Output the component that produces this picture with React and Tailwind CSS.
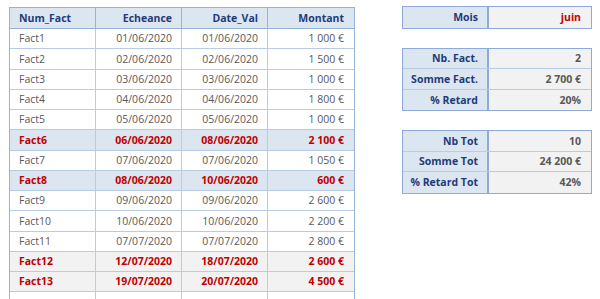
const rows = [
  { n: 'Fact1', e: '01/06/2020', d: '01/06/2020', m: '1 000 €' },
  { n: 'Fact2', e: '02/06/2020', d: '02/06/2020', m: '1 500 €' },
  { n: 'Fact3', e: '03/06/2020', d: '03/06/2020', m: '1 000 €' },
  { n: 'Fact4', e: '04/06/2020', d: '04/06/2020', m: '1 800 €' },
  { n: 'Fact5', e: '05/06/2020', d: '05/06/2020', m: '1 000 €' },
  { n: 'Fact6', e: '06/06/2020', d: '08/06/2020', m: '2 100 €', hl: 'blue' },
  { n: 'Fact7', e: '07/06/2020', d: '07/06/2020', m: '1 050 €' },
  { n: 'Fact8', e: '08/06/2020', d: '10/06/2020', m: '600 €', hl: 'blue' },
  { n: 'Fact9', e: '09/06/2020', d: '09/06/2020', m: '2 600 €' },
  { n: 'Fact10', e: '10/06/2020', d: '10/06/2020', m: '2 200 €' },
  { n: 'Fact11', e: '07/07/2020', d: '07/07/2020', m: '2 800 €' },
  { n: 'Fact12', e: '12/07/2020', d: '18/07/2020', m: '2 600 €', hl: 'grey' },
  { n: 'Fact13', e: '19/07/2020', d: '20/07/2020', m: '4 500 €', hl: 'grey' },
  { n: '', e: '', d: '', m: '' },
];

const Row = ({ r }) => {
  const bg = r.hl === 'blue' ? 'bg-[#dce6f1]' : r.hl === 'grey' ? 'bg-[#f2f2f2]' : 'bg-white';
  const txt = r.hl ? 'text-[#c00000] font-bold' : 'text-[#595959]';
  return (
    <div className={`grid grid-cols-4 h-[20.25px] border-b border-[#b8cce4] ${bg} ${txt}`}>
      <div className="flex items-center pl-[9px] border-r border-[#b8cce4]">{r.n}</div>
      <div className="flex items-center justify-end pr-[9px] border-r border-[#b8cce4]">{r.e}</div>
      <div className="flex items-center justify-end pr-[9px] border-r border-[#b8cce4]">{r.d}</div>
      <div className="flex items-center justify-end pr-[10px]">{r.m}</div>
    </div>
  );
};

const Box = ({ items }) => (
  <div className="border border-[#8eaadb] w-[190px]">
    {items.map((it, i) => (
      <div
        key={it[0]}
        className={`grid grid-cols-[86px_1fr] h-[20.5px] ${i < items.length - 1 ? 'border-b border-[#b8cce4]' : ''}`}
      >
        <div className="flex items-center justify-end pr-[9px] bg-[#dce6f1] border-r-2 border-[#8eaadb] text-[#1f3b78] font-bold">
          {it[0]}
        </div>
        <div className={`flex items-center justify-end pr-[10px] bg-[#f2f2f2] font-bold ${it[2] ? 'text-[#c00000]' : 'text-[#595959]'}`}>
          {it[1]}
        </div>
      </div>
    ))}
  </div>
);

export default function App() {
  return (
    <div className="w-[600px] h-[299px] overflow-hidden bg-white flex pl-[9px] pt-[7px] text-[10.5px] leading-none" style={{ fontFamily: '"Open Sans", "Liberation Sans", sans-serif' }}>
      <div className="w-[346px] border-l border-r border-t border-[#95b3d7]">
        <div className="grid grid-cols-4 h-[21px] bg-[#dce6f1] border-b border-[#95b3d7] text-[#1f3b78] font-bold">
          <div className="flex items-center pl-[9px] border-r border-[#95b3d7]">Num_Fact</div>
          <div className="flex items-center justify-end pr-[9px] border-r border-[#95b3d7]">Echeance</div>
          <div className="flex items-center justify-end pr-[9px] border-r border-[#95b3d7]">Date_Val</div>
          <div className="flex items-center justify-end pr-[10px]">Montant</div>
        </div>
        {rows.map((r, i) => (
          <Row key={i} r={r} />
        ))}
      </div>
      <div className="ml-[47px] -mt-[1px] flex flex-col">
        <Box items={[['Mois', 'juin', true]]} />
        <div className="mt-[19px]">
          <Box items={[['Nb. Fact.', '2'], ['Somme Fact.', '2 700 €'], ['% Retard', '20%']]} />
        </div>
        <div className="mt-[19px]">
          <Box items={[['Nb Tot', '10'], ['Somme Tot', '24 200 €'], ['% Retard Tot', '42%']]} />
        </div>
      </div>
    </div>
  );
}
